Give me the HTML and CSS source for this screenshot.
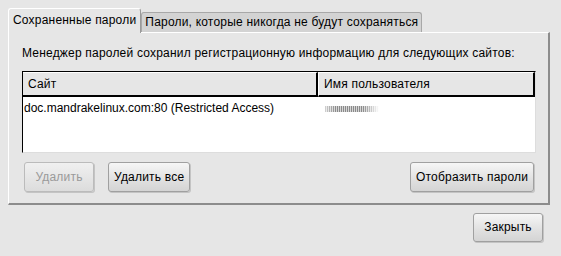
FILE: index.html
```html
<!DOCTYPE html>
<html>
<head>
<meta charset="UTF-8">
<title>Менеджер паролей</title>
<link rel="stylesheet" href="styles.css">
</head>
<body>
	<div class="dialog">
		<div class="tabs">
			<div class="tab active">Сохраненные пароли</div>
			<div class="tab">Пароли, которые никогда не будут сохраняться</div>
		</div>
		<div class="panel">
			<p class="intro">Менеджер паролей сохранил регистрационную информацию для следующих сайтов:</p>
			<div class="list">
				<div class="head">
					<div class="col site">Сайт</div>
					<div class="col user">Имя пользователя</div>
				</div>
				<div class="row">
					<div class="col site">doc.mandrakelinux.com:80 (Restricted Access)</div>
					<div class="col user"><span class="mask"></span></div>
				</div>
			</div>
			<div class="actions">
				<button class="btn" disabled>Удалить</button>
				<button class="btn">Удалить все</button>
				<button class="btn push">Отобразить пароли</button>
			</div>
		</div>
		<div class="footer">
			<button class="btn close">Закрыть</button>
		</div>
	</div>
</body>
</html>
```

FILE: styles.css
```css
body{
	margin: 0;
	background: #e6e6e6;
	font: 12px/1.2 "Liberation Sans", "DejaVu Sans", sans-serif;
	color: #000;
}
.dialog{
	width: 561px; height: 256px;
	padding: 8px 11px 0 8px;
	box-sizing: border-box;
}

/* tabs */
.tabs{
	display: flex;
	align-items: flex-end;
	height: 24px;
}
.tab{
	height: 19px;
	padding: 0 3px;
	line-height: 19px;
	background: #d3d3d3;
	border: 1px solid #a8a8a8;
	border-bottom: 0;
	border-radius: 3px 3px 0 0;
	letter-spacing: .2px;
	white-space: nowrap;
}
.tab.active{
	height: 24px;
	line-height: 23px;
	padding: 0 4px;
	background: #e6e6e6;
	border-color: #fff #9a9a9a #fff #fff;
	position: relative;
	z-index: 1;
	margin-bottom: -1px;
}

/* page frame */
.panel{
	height: 173px;
	box-sizing: border-box;
	border: 1px solid #fff;
	border-right: 2px solid #8c8c8c;
	border-bottom: 2px solid #8c8c8c;
	padding: 0 12px 0 13px;
}
.intro{
	margin: 13px 0 0;
	letter-spacing: .2px;
	white-space: nowrap;
}

/* list view */
.list{
	margin-top: 11px;
	height: 82px;
	box-sizing: border-box;
	background: #fff;
	border: 1px solid #ddd;
	border-top-color: #000;
	border-left-color: #000;
}
.head, .row{ display: flex; }
.head .col{
	height: 22px;
	line-height: 22px;
	background: #e6e6e6;
	border: 1px solid #fff;
	border-right: 2px solid #000;
	border-bottom: 2px solid #000;
	box-sizing: content-box;
	letter-spacing: .2px;
}
.head .site{ border-left: 0; }
.col{ padding: 0 5px; white-space: nowrap; }
.site{ width: 283px; }
.user{ flex: 1; }
.row .col{
	height: 22px;
	line-height: 22px;
}
.row .site{ padding-left: 1px; width: 289px; }
.row .user{ padding-left: 7px; }
.mask{
	display: inline-block;
	width: 54px; height: 6px;
	vertical-align: middle;
	background:
		linear-gradient(90deg, rgba(255,255,255,.6), transparent 20%, transparent 70%, #fff),
		repeating-linear-gradient(90deg, #8a8a8a 0 1px, #d6d6d6 1px 2px);
}

/* buttons */
.actions{
	display: flex;
	gap: 14px;
	margin: 9px 2px 0 2px;
}
.btn{
	height: 30px;
	padding: 0 5px;
	font: inherit;
	letter-spacing: .2px;
	white-space: nowrap;
	color: #000;
	background: linear-gradient(#f6f6f6, #e0e0e0 60%, #d4d4d4);
	border: 1px solid #a0a0a0;
	border-radius: 3px;
	box-shadow: 1px 1px 0 #c4c4c4;
}
.btn[disabled]{
	width: 70px;
	color: #9a9a9a;
	border-color: #bbb;
	background: linear-gradient(#f0f0f0, #dcdcdc);
}
.push{
	margin-left: auto;
	width: 124px;
}
.footer{
	display: flex;
	justify-content: flex-end;
	padding: 8px 7px 0 0;
}
.close{
	width: 70px;
	height: 29px;
}
```
